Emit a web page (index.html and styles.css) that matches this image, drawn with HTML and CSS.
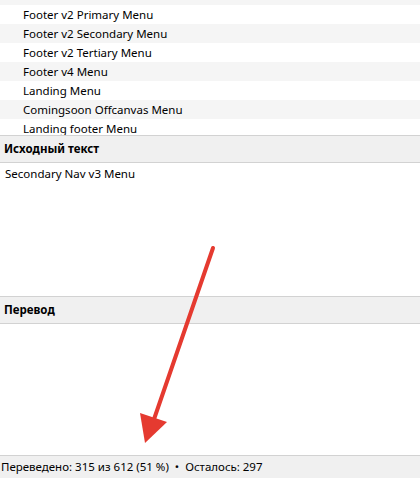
FILE: index.html
```html
<!DOCTYPE html>
<html lang="ru">
<head>
<meta charset="utf-8">
<link rel="stylesheet" href="styles.css">
</head>
<body>
<div class="app">
  <div class="list">
    <div class="row alt first">Footer v1 Menu</div>
    <div class="row">Footer v2 Primary Menu</div>
    <div class="row alt">Footer v2 Secondary Menu</div>
    <div class="row">Footer v2 Tertiary Menu</div>
    <div class="row alt">Footer v4 Menu</div>
    <div class="row">Landing Menu</div>
    <div class="row alt">Comingsoon Offcanvas Menu</div>
    <div class="row">Landing footer Menu</div>
  </div>
  <div class="section-head">Исходный текст</div>
  <div class="pane source">Secondary Nav v3 Menu</div>
  <div class="section-head">Перевод</div>
  <div class="pane target"></div>
  <div class="status">Переведено: 315 из 612 (51 %)&nbsp; • &nbsp;Осталось: 297</div>
  <svg class="arrow" width="420" height="478" viewBox="0 0 420 478">
    <line x1="213" y1="248" x2="152" y2="425" stroke="#e53a30" stroke-width="4" stroke-linecap="round"/>
    <polygon points="145,443 140,413 167,422" fill="#e53a30"/>
  </svg>
</div>
</body>
</html>
```
FILE: styles.css
```css
* { box-sizing: border-box; }
html, body { margin: 0; padding: 0; background: #fff; }
body {
  font-family: "Noto Sans", "Open Sans", sans-serif;
  font-size: 11.5px;
  color: #000;
}
.app {
  position: relative;
  width: 420px;
  height: 478px;
  display: flex;
  flex-direction: column;
  overflow: hidden;
}
.list {
  height: 135px;
  overflow: hidden;
  flex: none;
}
.row {
  height: 19px;
  line-height: 19px;
  padding-left: 23px;
  white-space: nowrap;
}
.row.first { margin-top: -14px; }
.row.alt { background: #f5f5f5; }
.section-head {
  flex: none;
  height: 28px;
  line-height: 26px;
  background: #f0f0f0;
  border-top: 1px solid #d2d2d2;
  border-bottom: 1px solid #d2d2d2;
  font-weight: bold;
  padding-left: 4px;
}
.pane {
  flex: none;
  background: #fff;
  padding: 2px 5px;
  line-height: 18px;
}
.source { height: 133px; }
.target { height: 131px; }
.status {
  flex: 1;
  background: #f0f0f0;
  border-top: 1px solid #d2d2d2;
  padding-left: 1px;
  line-height: 22px;
  white-space: nowrap;
}
.arrow {
  position: absolute;
  left: 0;
  top: 0;
  pointer-events: none;
}
```
